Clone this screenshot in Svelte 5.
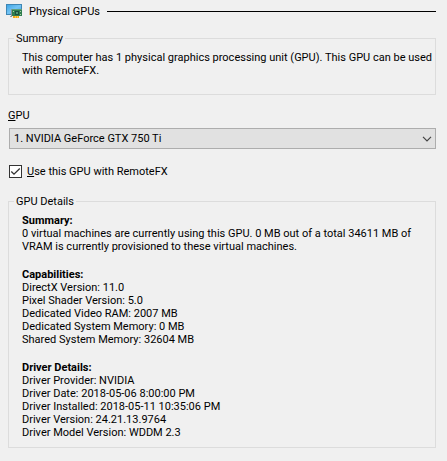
<script>
  const gpus = ['NVIDIA GeForce GTX 750 Ti']

  const details = [
    {
      title: 'Summary',
      lines: [
        '0 virtual machines are currently using this GPU. 0 MB out of a total 34611 MB of VRAM is currently provisioned to these virtual machines.',
      ],
    },
    {
      title: 'Capabilities',
      lines: [
        'DirectX Version: 11.0',
        'Pixel Shader Version: 5.0',
        'Dedicated Video RAM: 2007 MB',
        'Dedicated System Memory: 0 MB',
        'Shared System Memory: 32604 MB',
      ],
    },
    {
      title: 'Driver Details',
      lines: [
        'Driver Provider: NVIDIA',
        'Driver Date: 2018-05-06 8:00:00 PM',
        'Driver Installed: 2018-05-11 10:35:06 PM',
        'Driver Version: 24.21.13.9764',
        'Driver Model Version: WDDM 2.3',
      ],
    },
  ]

  let selected = $state(0)
  let useGpu = $state(true)
</script>

<main>
  <header>
    <svg class="icon" width="16" height="16" viewBox="0 0 16 16" aria-hidden="true">
      <defs>
        <linearGradient id="screen" x1="0" y1="0" x2="1" y2="1">
          <stop offset="0" stop-color="#3fa5e6" />
          <stop offset="0.5" stop-color="#74c4f4" />
          <stop offset="1" stop-color="#3a9fe2" />
        </linearGradient>
      </defs>
      <rect x="0" y="1" width="16" height="11" fill="#3f86b4" />
      <rect x="1" y="2" width="14" height="9" fill="url(#screen)" />
      <path d="M4 13h2v1H4z" fill="#8fa3ad" />
      <rect x="5" y="6" width="1" height="8" fill="#8a9499" />
      <rect x="6" y="6" width="10" height="7" fill="#2f7d4f" />
      <path d="M6 6h10v1H6z" fill="#5f9f7c" />
      <rect x="9" y="8" width="4" height="4" fill="#1c4f40" />
      <rect x="10" y="9" width="2" height="2" fill="#4f9a75" />
      <path d="M7 8h1v1H7zM14 8h1v1h-1zM14 11h1v1h-1z" fill="#a9d3a0" />
      <path d="M7 13h6v2H7z" fill="#f0a51c" />
      <path d="M9 13h1v2H9zM11 13h1v2h-1z" fill="#ffc842" />
    </svg>
    <h1>Physical GPUs</h1>
    <span class="rule"></span>
  </header>

  <fieldset class="summary">
    <legend>Summary</legend>
    <div class="content">
      <p>
        This computer has 1 physical graphics processing unit (GPU). This GPU can be used with
        RemoteFX.
      </p>
    </div>
  </fieldset>

  <label class="caption" for="gpu"><u>G</u>PU</label>
  <div class="dropdown">
    <select id="gpu" accesskey="g" bind:value={selected}>
      {#each gpus as gpu, i}
        <option value={i}>{i + 1}. {gpu}</option>
      {/each}
    </select>
    <svg width="10" height="6" viewBox="0 0 10 6" aria-hidden="true">
      <path d="M1 0.8l4 4 4-4" fill="none" stroke="#444" stroke-width="1.2" />
    </svg>
  </div>

  <label class="check">
    <span class="box">
      <input type="checkbox" accesskey="u" bind:checked={useGpu} />
      {#if useGpu}
        <svg width="13" height="13" viewBox="0 0 13 13" aria-hidden="true">
          <path d="M2.3 6.5l2.7 2.7 5.8-5.7" fill="none" stroke="#333" stroke-width="1.3" />
        </svg>
      {/if}
    </span>
    <span><u>U</u>se this GPU with RemoteFX</span>
  </label>

  <fieldset>
    <legend>GPU Details</legend>
    <div class="content">
      {#each details as section}
        <section>
          <h2>{section.title}:</h2>
          {#each section.lines as line}
            <p>{line}</p>
          {/each}
        </section>
      {/each}
    </div>
  </fieldset>
</main>

<style>
  :global(body) {
    background: #f0f0f0;
  }
  main {
    padding: 3px 11px 12px 8px;
    font-family: Tahoma, Roboto, sans-serif;
    font-size: 11px;
    line-height: 13px;
    color: #000;
  }
  h1,
  h2,
  p {
    margin: 0;
    font-size: 11px;
    line-height: 13px;
  }
  h1 {
    font-weight: 400;
  }
  header {
    display: flex;
    align-items: center;
    gap: 7px;
    margin: 0 0 13px -2px;
  }
  .rule {
    flex: 1;
    height: 1px;
    background: #000;
  }
  fieldset {
    min-width: 0;
    margin: 0;
    padding: 0 1px 8px 5px;
    border: 1px solid #dcdcdc;
  }
  .summary {
    padding-bottom: 17px;
  }
  legend {
    padding: 0 2px;
  }
  .content {
    display: flex;
    flex-direction: column;
    gap: 15px;
    padding: 6px 0 0 8px;
  }
  .caption {
    display: block;
    margin: 14px 0 6px;
  }
  .dropdown {
    position: relative;
    margin-left: 1px;
  }
  select {
    display: block;
    width: 100%;
    height: 21px;
    padding: 0 20px 0 4px;
    appearance: none;
    border: 1px solid #adadad;
    border-radius: 0;
    background: #e1e1e1;
    color: inherit;
    font: inherit;
  }
  .dropdown svg {
    position: absolute;
    top: 8px;
    right: 4px;
    pointer-events: none;
  }
  .check {
    display: flex;
    align-items: center;
    gap: 5px;
    width: fit-content;
    margin: 16px 0 17px 1px;
  }
  .box {
    position: relative;
    width: 13px;
    height: 13px;
  }
  input {
    display: block;
    width: 13px;
    height: 13px;
    margin: 0;
    appearance: none;
    border: 1px solid #333;
    background: #fff;
  }
  .box svg {
    position: absolute;
    inset: 0;
    pointer-events: none;
  }
</style>
